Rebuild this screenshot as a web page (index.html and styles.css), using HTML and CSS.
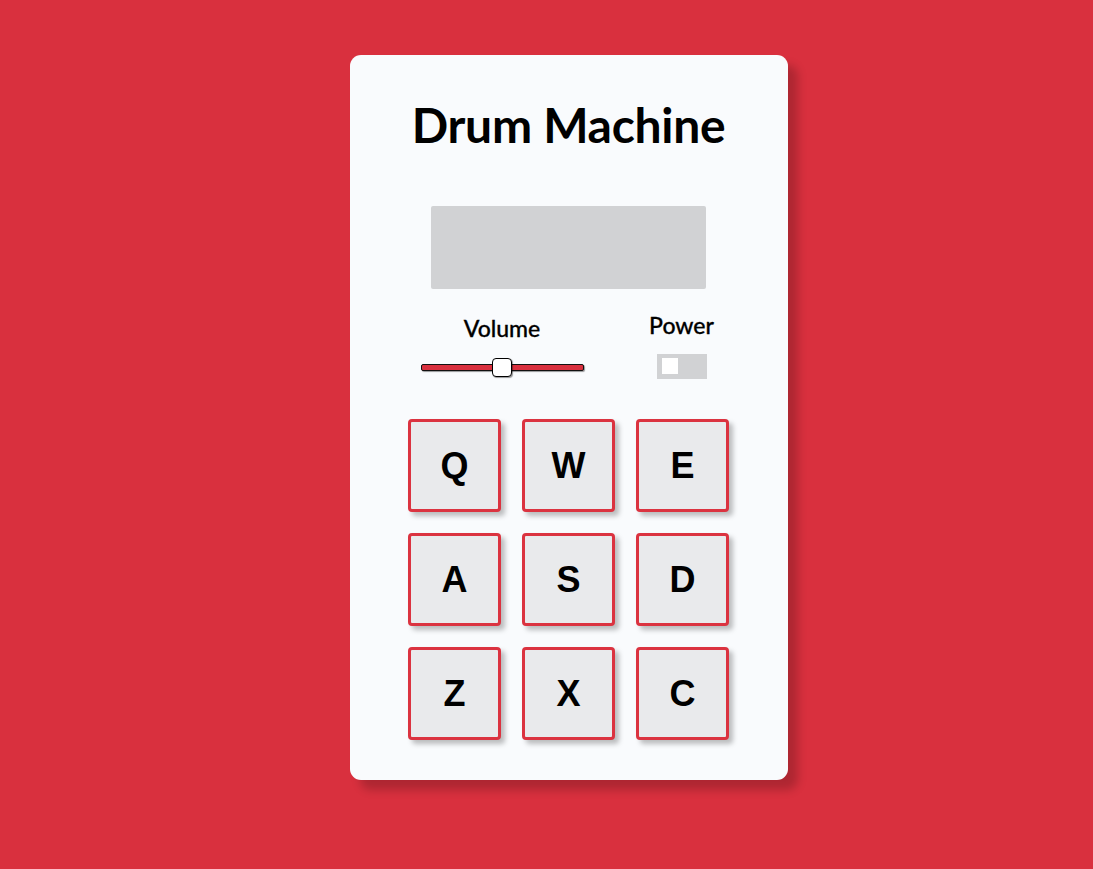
FILE: index.html
```html
<!DOCTYPE html>
<html>
<head>
<meta charset="utf-8">
<link rel="stylesheet" href="styles.css">
</head>
<body>
<div class="page">
  <div class="card">
    <h1 class="title">Drum Machine</h1>
    <div class="display"></div>
    <div class="controls">
      <div class="volume">
        <div class="label">Volume</div>
        <div class="slider">
          <div class="track"></div>
          <div class="thumb"></div>
        </div>
      </div>
      <div class="power">
        <div class="label">Power</div>
        <div class="toggle"><div class="knob"></div></div>
      </div>
    </div>
    <div class="pads">
      <div class="pad">Q</div>
      <div class="pad">W</div>
      <div class="pad">E</div>
      <div class="pad">A</div>
      <div class="pad">S</div>
      <div class="pad">D</div>
      <div class="pad">Z</div>
      <div class="pad">X</div>
      <div class="pad">C</div>
    </div>
  </div>
</div>
</body>
</html>
```
FILE: styles.css
```css
html, body {
  margin: 0;
  padding: 0;
  height: 100%;
}
body {
  background: #d9303e;
  font-family: "Lato", "Open Sans", sans-serif;
}
.page {
  display: flex;
  justify-content: center;
  padding: 55px 0 0 45px;
}
.card {
  width: 438px;
  height: 725px;
  box-sizing: border-box;
  background: #f9fbfd;
  border-radius: 11px;
  box-shadow: 10px 10px 10px rgba(0, 0, 0, 0.2);
  display: flex;
  flex-direction: column;
  align-items: center;
  padding: 40px 1px 0 0;
}
.title {
  margin: 0;
  font-size: 48px;
  font-weight: 700;
  line-height: 60px;
  color: #000;
  letter-spacing: -0.3px;
}
.display {
  margin-top: 51px;
  width: 275px;
  height: 83px;
  background: #d1d2d4;
  border-radius: 2px;
}
.controls {
  display: flex;
  width: 296px;
  margin-top: 23px;
  justify-content: space-between;
}
.label {
  font-size: 23px;
  line-height: 26px;
  font-weight: 500;
  color: #000;
  text-align: center;
  white-space: nowrap;
  -webkit-text-stroke: 0.3px #000;
}
.volume {
  width: 163px;
  display: flex;
  flex-direction: column;
  align-items: center;
  padding-top: 3px;
}
.slider {
  position: relative;
  width: 163px;
  height: 20px;
  margin-top: 17px;
}
.track {
  position: absolute;
  left: 0;
  right: 0;
  top: 6px;
  height: 5px;
  background: #d9303e;
  border: 1px solid #111;
  border-radius: 2px;
  box-shadow: 1px 1px 1px rgba(0, 0, 0, 0.4);
}
.thumb {
  position: absolute;
  left: 71px;
  top: 0;
  width: 18px;
  height: 17px;
  background: #fff;
  border: 1.5px solid #000;
  border-radius: 4px;
  box-shadow: 1px 1px 1px rgba(0, 0, 0, 0.4);
}
.power {
  width: 70px;
  display: flex;
  flex-direction: column;
  align-items: center;
}
.toggle {
  margin-top: 16px;
  width: 50px;
  height: 25px;
  box-sizing: border-box;
  background: #d1d2d4;
  padding: 4px 0 0 5px;
}
.knob {
  width: 16px;
  height: 16px;
  background: #fff;
}
.pads {
  margin-top: 40px;
  display: grid;
  grid-template-columns: repeat(3, 93px);
  grid-auto-rows: 93px;
  column-gap: 21px;
  row-gap: 21px;
}
.pad {
  box-sizing: border-box;
  border: 3px solid #db3340;
  border-radius: 4px;
  background: #e9eaec;
  box-shadow: 4px 4px 5px rgba(0, 0, 0, 0.25);
  display: flex;
  align-items: center;
  justify-content: center;
  font-family: "Liberation Sans", Arial, sans-serif;
  font-weight: 700;
  font-size: 36px;
  color: #000;
}
```
